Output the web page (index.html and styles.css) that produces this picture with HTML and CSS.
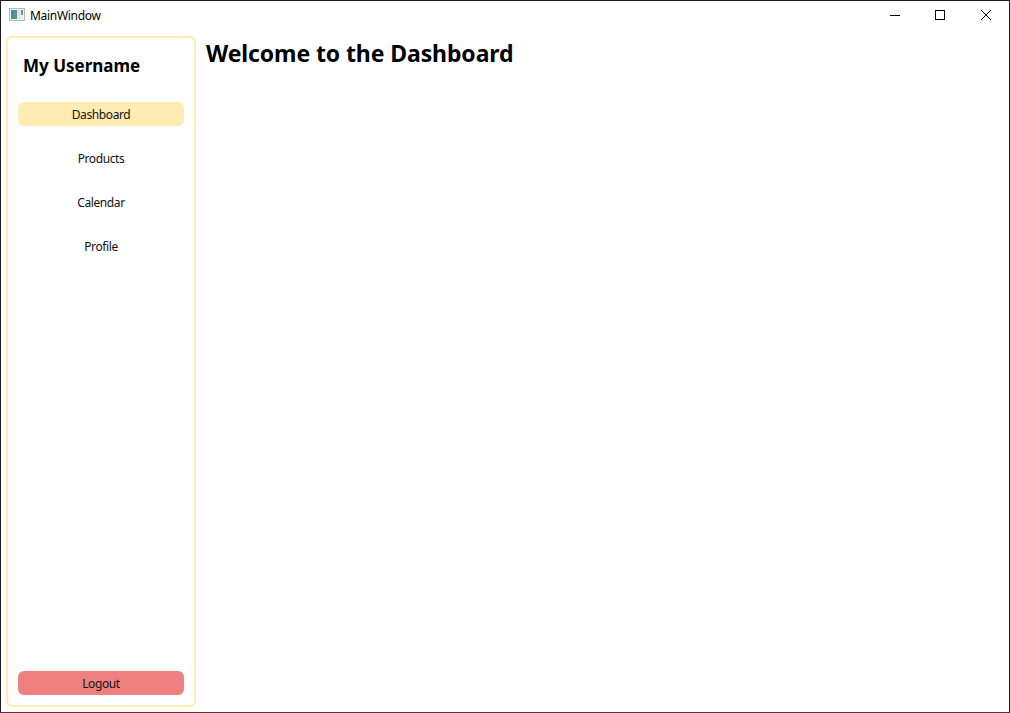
FILE: index.html
```html
<!DOCTYPE html>
<html lang="en">
<head>
<meta charset="utf-8">
<title>MainWindow</title>
<link rel="stylesheet" href="styles.css">
</head>
<body>
<div class="window">
  <header class="titlebar">
    <svg class="app-icon" width="16" height="14" viewBox="0 0 16 14">
      <defs>
        <linearGradient id="pane" x1="0" y1="0" x2="1" y2="1">
          <stop offset="0" stop-color="#4d7fae"/>
          <stop offset="1" stop-color="#58a578"/>
        </linearGradient>
      </defs>
      <rect x="0.5" y="0.5" width="15" height="12" fill="#eef0f2" stroke="#b4b8bc"/>
      <rect x="2" y="2" width="6" height="9" fill="url(#pane)"/>
      <rect x="8" y="2" width="4" height="9" fill="#dfe4e8"/>
      <rect x="12" y="2" width="2" height="5" fill="#62a08c"/>
    </svg>
    <span class="title">MainWindow</span>
    <div class="controls">
      <svg width="46" height="29" viewBox="0 0 46 29"><path d="M19 14.5h10" stroke="#000"/></svg>
      <svg width="46" height="29" viewBox="0 0 46 29"><rect x="18.5" y="9.5" width="9" height="9" fill="none" stroke="#000"/></svg>
      <svg width="46" height="29" viewBox="0 0 46 29"><path d="M18 9l10 10M28 9l-10 10" stroke="#000"/></svg>
    </div>
  </header>
  <div class="content">
    <nav class="sidebar">
      <h2 class="username">My Username</h2>
      <button class="nav-item active"><span>Dashboard</span></button>
      <button class="nav-item"><span>Products</span></button>
      <button class="nav-item"><span>Calendar</span></button>
      <button class="nav-item"><span>Profile</span></button>
      <button class="nav-item logout"><span>Logout</span></button>
    </nav>
    <main class="page"><h1 class="heading">Welcome to the Dashboard</h1></main>
  </div>
</div>
</body>
</html>
```
FILE: styles.css
```css
* { box-sizing: border-box; }
body { margin: 0; font-family: "Noto Sans", "Open Sans", sans-serif; font-size: 12px; color: #000; }
.window { width: 1010px; height: 713px; border: 1px solid #1c1a1e; border-bottom-color: #6b3034; background: #fff; display: flex; flex-direction: column; }
.titlebar { height: 30px; display: flex; align-items: flex-start; padding-left: 8px; }
.app-icon { margin-top: 7px; }
.title { margin-left: 5px; line-height: 29px; letter-spacing: -0.3px; }
.controls { margin-left: auto; display: flex; }
.content { flex: 1; display: flex; padding: 5px; }
.sidebar { width: 190px; border: 2px solid #ffecb3; border-radius: 6px; padding: 10px; display: flex; flex-direction: column; }
.username { margin: 0 0 18px 5px; font-size: 17px; line-height: 36px; white-space: nowrap; }
.nav-item { font: inherit; font-size: 12px; letter-spacing: -0.4px; color: #111; height: 24px; line-height: 22px; padding: 2px 0 0; border: 0; border-radius: 6px; margin-bottom: 20px; background: transparent; text-align: center; }
.active { background: #ffecb3; }
.logout { background: #f08080; margin-top: auto; margin-bottom: 0; }
.page { padding-left: 10px; }
.heading { margin: 0; font-size: 23px; line-height: 34px; letter-spacing: -0.1px; white-space: nowrap; }
```
